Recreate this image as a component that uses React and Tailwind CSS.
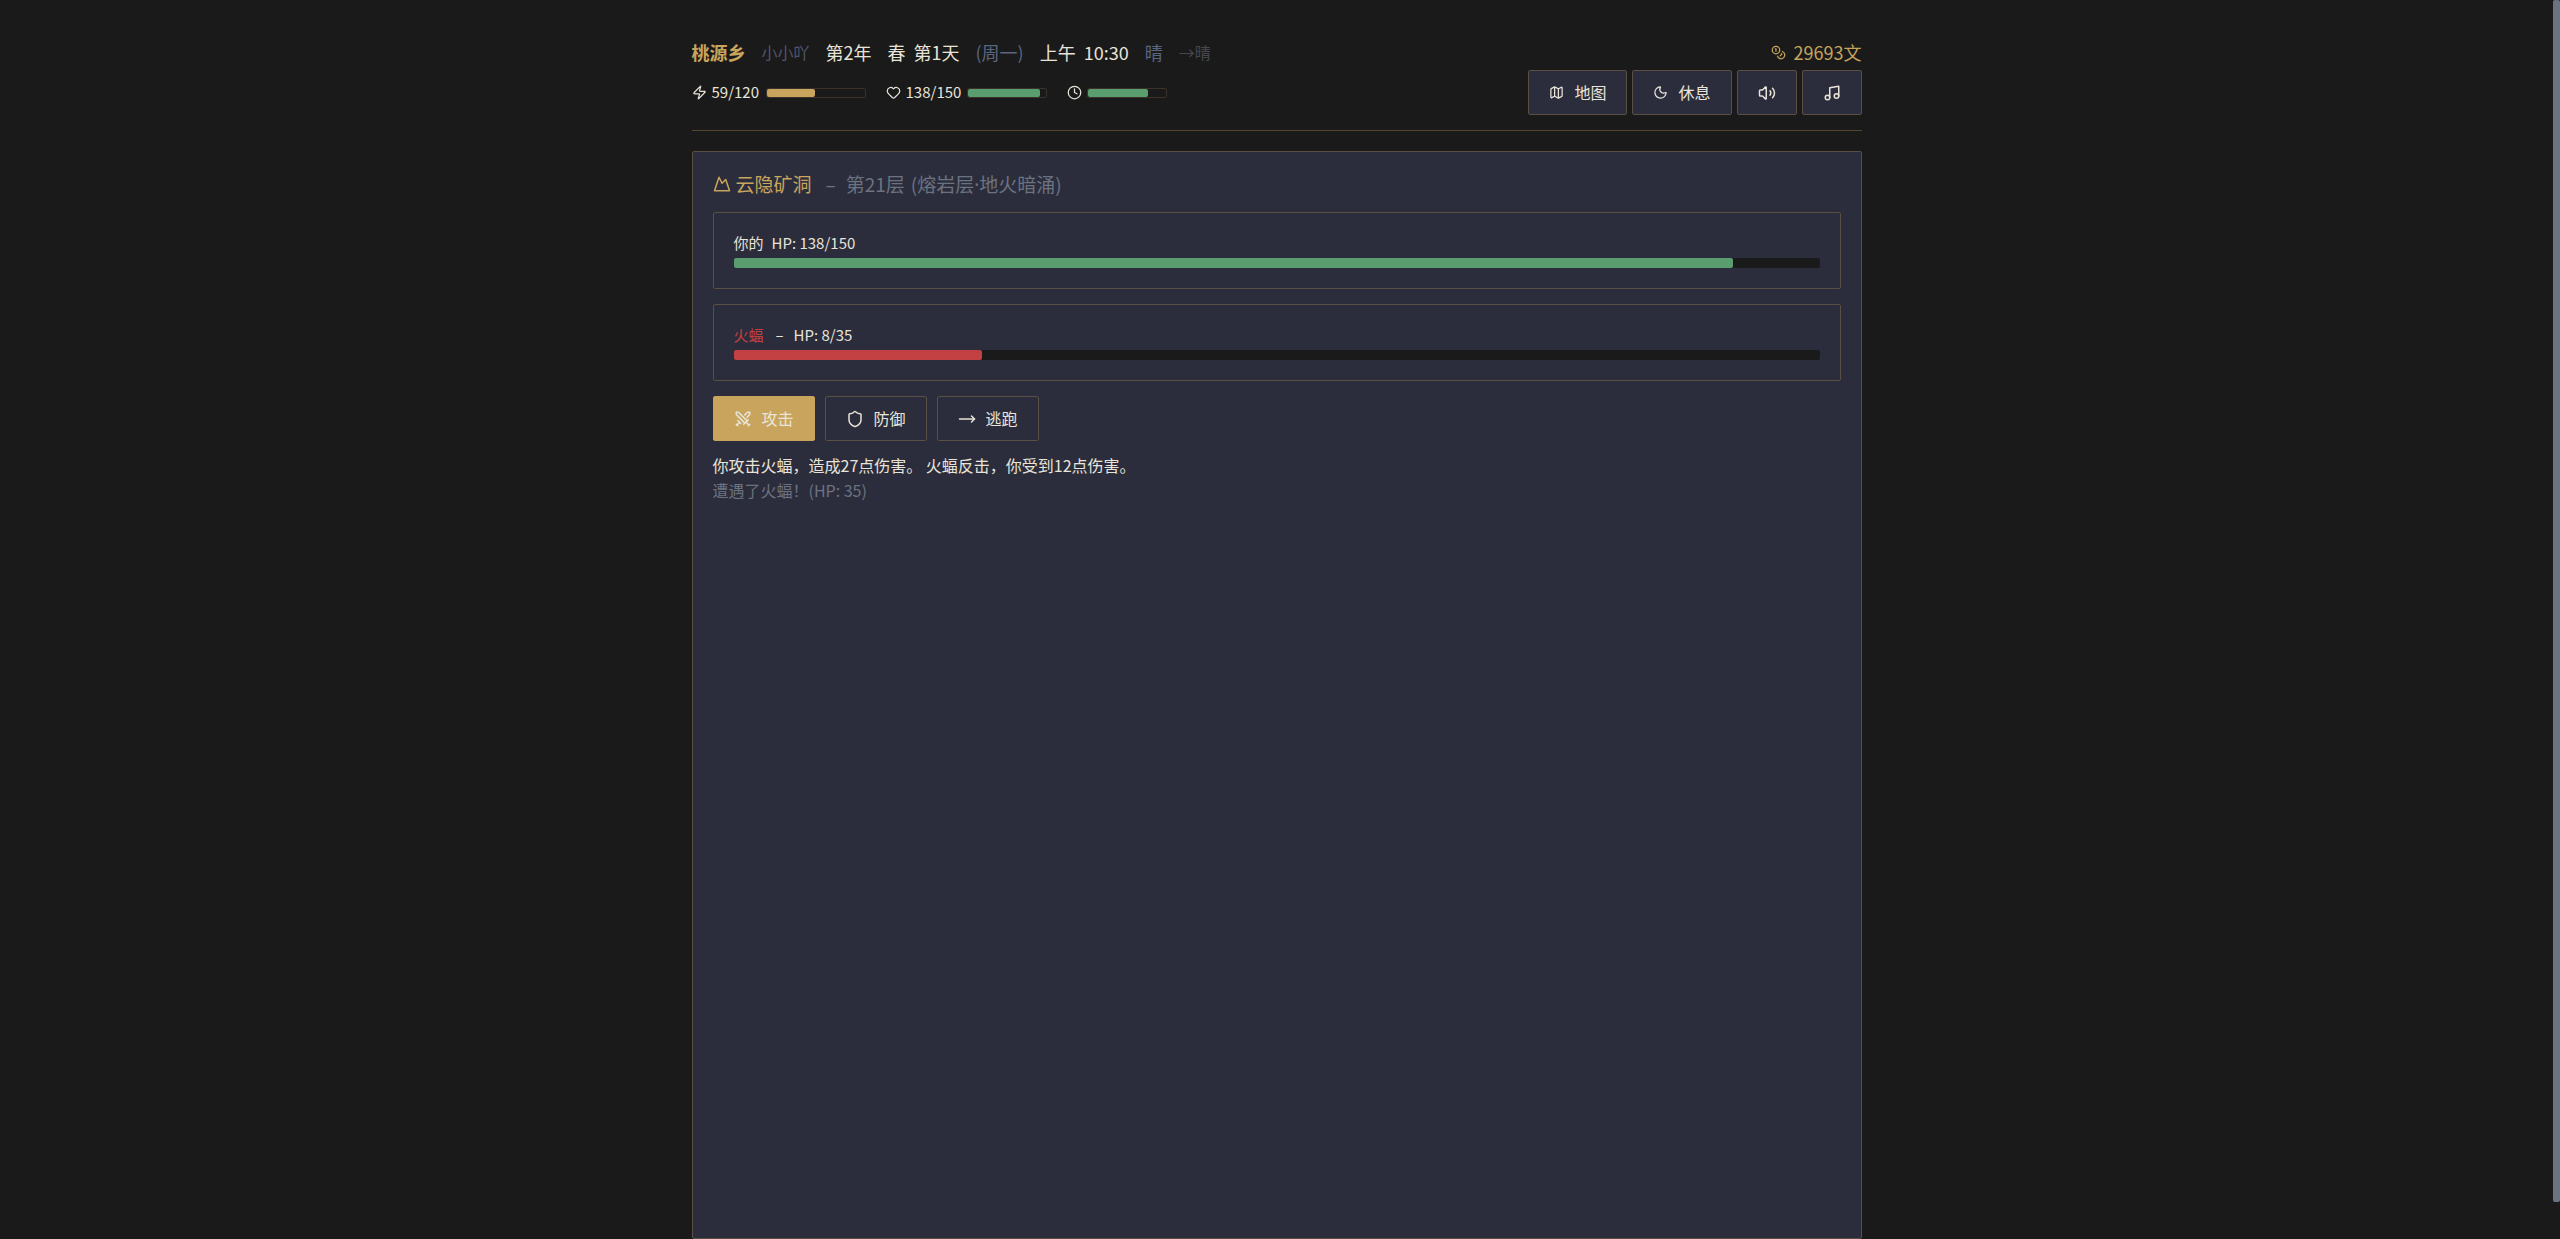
import { Clock, Heart, Map, Moon, Mountain, MoveRight, Music, Shield, Swords, Volume2, Zap } from 'lucide-react'
import clsx from 'clsx'

const LOG = [
  '你攻击火蝠，造成27点伤害。 火蝠反击，你受到12点伤害。',
  '遭遇了火蝠！(HP: 35)',
]

function CoinsIcon() {
  return (
    <svg width="15" height="15" viewBox="0 0 24 24" fill="none" stroke="currentColor" strokeWidth="2" strokeLinecap="round" strokeLinejoin="round">
      <circle cx="8" cy="8" r="6" />
      <path d="M18.09 10.37A6 6 0 1 1 10.34 18" />
      <path d="M7 6h1v4" />
      <path d="m16.71 13.88.7.71-2.82 2.82" />
    </svg>
  )
}

function Button({ icon: Icon, iconSize = 18, label, title, variant = 'panel' }) {
  return (
    <button
      type="button"
      aria-label={title}
      className={clsx(
        'flex h-[45px] items-center justify-center gap-2.5 rounded-xs border px-5 text-base',
        variant === 'panel' && 'border-[#5b4e42] bg-[#2c2d3c]',
        variant === 'outline' && 'border-[#5b4e42]',
        variant === 'primary' && 'border-[#c8a45c] bg-[#c8a45c]',
      )}
    >
      <Icon size={iconSize} />
      {label && <span className="pb-0.5">{label}</span>}
    </button>
  )
}

function Meter({ value, max, className, fill }) {
  return (
    <div className={clsx('h-2.5 rounded-xs', className)}>
      <div className={clsx('h-full rounded-xs', fill)} style={{ width: `${(value / max) * 100}%` }} />
    </div>
  )
}

function Stat({ icon: Icon, value, max, showText = true, barWidth, fill }) {
  return (
    <div className="flex items-center">
      <Icon size={15} className="mr-[5px]" />
      {showText && <span className="mr-1.5 min-w-12 text-[15px]">{value}/{max}</span>}
      <Meter value={value} max={max} className={clsx('border border-[#3a3129]', barWidth)} fill={fill} />
    </div>
  )
}

function StatusBar() {
  return (
    <header className="border-b border-[#54452f] pb-[15px]">
      <div className="flex items-center justify-between text-lg leading-6">
        <div className="flex items-center gap-4">
          <h1 className="font-bold text-[#c8a45c]">桃源乡</h1>
          <span className="text-base text-[#4f566a]">小小吖</span>
          <span>第2年</span>
          <div className="flex gap-2">
            <span>春</span>
            <span>第1天</span>
          </div>
          <span className="text-[#5a6580]">(周一)</span>
          <div className="flex gap-2">
            <span>上午</span>
            <span>10:30</span>
          </div>
          <span className="text-[#5a6580]">晴</span>
          <span className="text-base text-[#45484f]">→晴</span>
        </div>
        <div className="flex items-center gap-2 text-[#c8a45c]">
          <CoinsIcon />
          <span>29693文</span>
        </div>
      </div>
      <div className="mt-1.5 flex items-center justify-between">
        <div className="flex items-center gap-5">
          <Stat icon={Zap} value={59} max={120} barWidth="w-[100px]" fill="bg-[#c8a45c]" />
          <Stat icon={Heart} value={138} max={150} barWidth="w-20" fill="bg-[#5a9e6f]" />
          <Stat icon={Clock} value={77} max={100} showText={false} barWidth="w-20" fill="bg-[#5a9e6f]" />
        </div>
        <div className="flex gap-[5px]">
          <Button icon={Map} iconSize={15} label="地图" />
          <Button icon={Moon} iconSize={15} label="休息" />
          <Button icon={Volume2} title="音效" />
          <Button icon={Music} title="音乐" />
        </div>
      </div>
    </header>
  )
}

function HpCard({ children, value, max, fill }) {
  return (
    <div className="rounded-xs border border-[#5b4e42] p-5">
      <div className="mb-1.5 flex text-[15px] leading-[19px]">{children}</div>
      <Meter value={value} max={max} className="bg-[#1a1a1a]" fill={fill} />
    </div>
  )
}

export default function App() {
  return (
    <div className="flex h-screen overflow-hidden bg-[#1a1a1a] font-['Noto_Sans_CJK_SC',sans-serif] text-[#e8e4d9]">
      <div className="h-full grow overflow-y-auto">
        <div className="mx-auto flex min-h-[calc(100vh+40px)] w-full max-w-[1170px] flex-col gap-5 py-10">
          <StatusBar />
          <main className="flex grow flex-col rounded-xs border border-[#5b4e42] bg-[#2c2d3c] p-5">
            <h2 className="mb-4 flex h-6 items-center text-[19px] leading-6 text-[#c8a45c]">
              <Mountain size={18} className="mr-[5px]" />
              <span className="mr-3.5">云隐矿洞</span>
              <span className="flex text-[#6b7280]">
                <span className="mr-2.5">–</span>
                <span className="mr-1.5">第21层</span>
                <span>(熔岩层<span className="font-['Noto_Sans',sans-serif]">·</span>地火暗涌)</span>
              </span>
            </h2>
            <div className="flex flex-col gap-[15px]">
              <HpCard value={138} max={150} fill="bg-[#5a9e6f]">
                <span className="mr-2">你的</span>
                <span>HP: 138/150</span>
              </HpCard>
              <HpCard value={8} max={35} fill="bg-[#c34043]">
                <span className="mr-3 text-[#c34043]">火蝠</span>
                <span className="mr-2.5">–</span>
                <span>HP: 8/35</span>
              </HpCard>
              <div className="flex gap-2.5">
                <Button icon={Swords} label="攻击" variant="primary" />
                <Button icon={Shield} label="防御" variant="outline" />
                <Button icon={MoveRight} label="逃跑" variant="outline" />
              </div>
            </div>
            <ul className="mt-3 text-base leading-[25px]">
              {LOG.map((line, i) => (
                <li key={line} className={clsx(i > 0 && 'text-[#6b7280]')}>{line}</li>
              ))}
            </ul>
          </main>
        </div>
      </div>
      {/* scroll track */}
      <div className="w-[7px] shrink-0">
        <div className="h-[97%] rounded-xs bg-[#6b7280]" />
      </div>
    </div>
  )
}
